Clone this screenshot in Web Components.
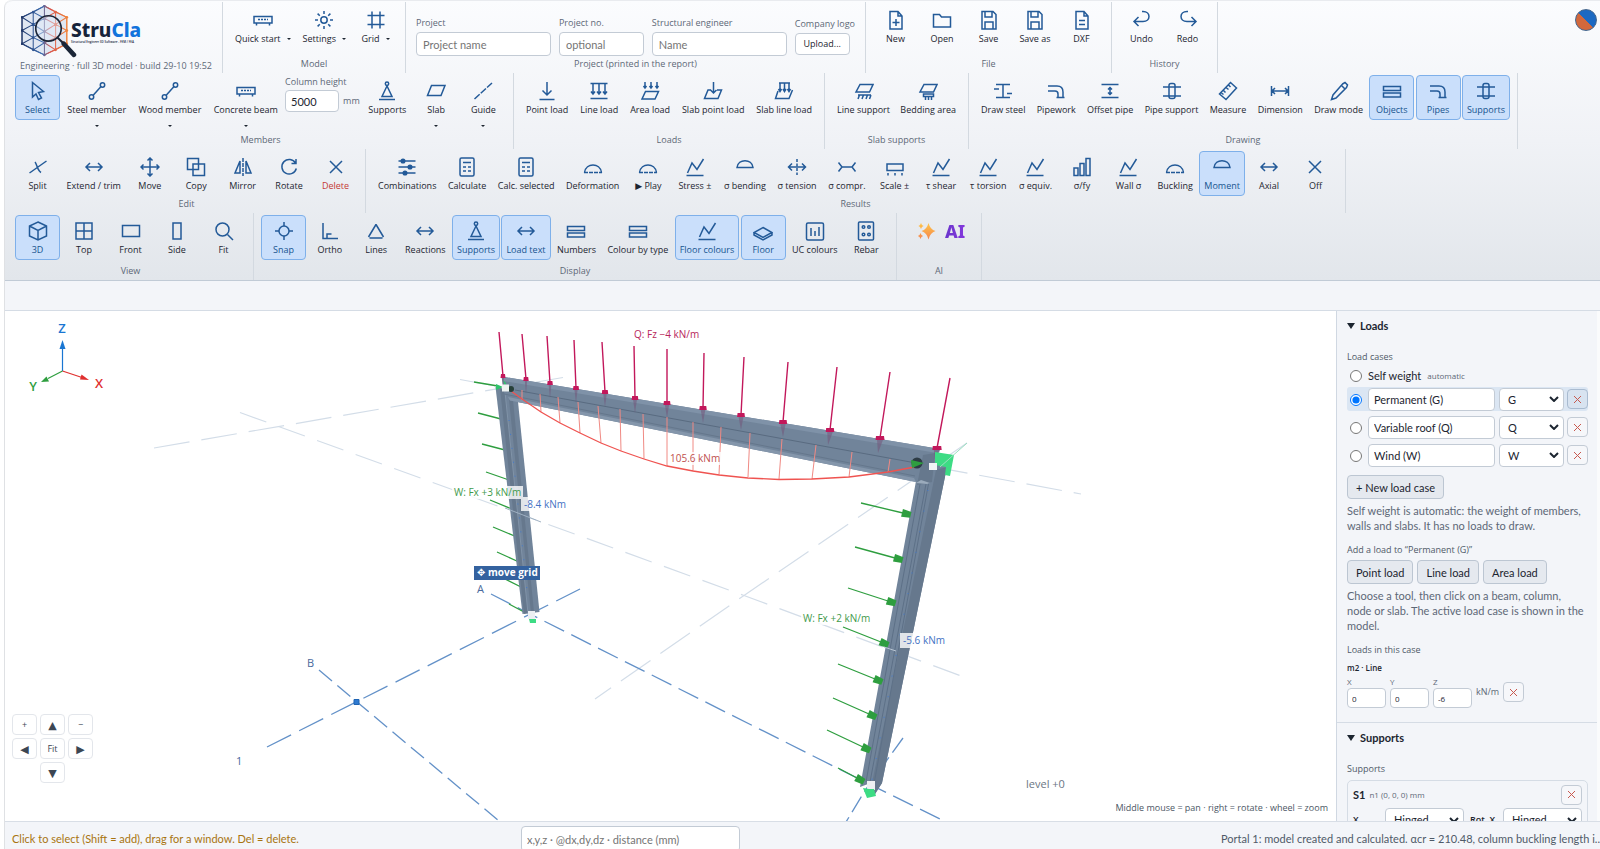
<!DOCTYPE html>
<html lang="en">
<head>
<meta charset="utf-8">
<title>StruCla – Engineering</title>
<style>
  html, body { margin: 0; height: 100%; background: #fff; overflow: hidden; }
  body { font: 11px/15px Lato, "Open Sans", sans-serif; color: #1c2530; }
</style>
</head>
<body>
<strucla-app></strucla-app>

<script>
const SMALL = '9px/14px "Open Sans", "DejaVu Sans", sans-serif';

/* Base class: clones the static markup of each element into an open root. */
class Base extends HTMLElement {
  constructor() {
    super();
    this.attachShadow({ mode: 'open' });
  }
  connectedCallback() {
    if (this.ready) return;
    this.ready = true;
    const t = document.createElement('template');
    t.innerHTML = `<style>*{box-sizing:border-box}</style>` + this.render();
    this.shadowRoot.append(t.content.cloneNode(true));
  }
}

/* Icons on a 20 × 20 grid. */
const slabLow = '<path d="M5.500 10.500h13L15 18H2z"/>';
const slabTop = '<path d="M6 3.500h13L15.500 11H2z"/>';
const calc = '<rect x="3" y="1" width="14" height="18" rx="1.500"/><path d="M6 5.500h8M6 10h3m2 0h3M6 14h3m2 0h3"/>';
const zig = '<path d="M2.500 16L7 6l5 6.500L18.500 2M1.500 18.500h17"/>';
const arch = '<path d="M1.500 15.500C3 5.500 17 5.500 18.500 15.500"/><path d="M1 15.500h18" stroke-dasharray="4 1"/>';
const dome = '<path d="M2 10.500h16C17 1.500 3 1.500 2 10.500z"/>';
const file = '<path d="M4 1.500h8l4 4.500v13H4zM12 1.500V6h4"/>';
const floppy = '<path d="M3 1.500h11l3 3v14.500H3zM6 1.500V7h7V1.500M6 19v-7h8v7"/>';
const both = '<path d="M2 10h16M6 6l-4 4 4 4M14 6l4 4-4 4"/>';
const bars2 = '<path d="M1.500 5.500h17v4h-17zM1.500 12h17v4h-17z"/>';
const pipe = '<path d="M2 5h9c4 0 6 2 6 6v5.500M2 10h7c2 0 3 1 3 3v3.500M10.500 16.500h8"/>';
const clamp = '<rect x="7" y="2.500" width="6" height="15" rx="2"/><path d="M1 6h18M1 15h18"/>';
const beam = '<path d="M1 6.500h18v6.500H1zM3.500 13v2.500M16.500 13v2.500"/><path d="M5 9.500h10" stroke-dasharray="2 1"/>';
const member = '<circle cx="4.500" cy="16" r="2.200"/><circle cx="15.500" cy="4" r="2.200"/><path d="M6 14.500L14 5.500"/>';
const support = '<circle cx="10" cy="2.800" r="1.700"/><path d="M10 5L5 15.500h10zM2 18.500h16"/>';
const cross = '<path d="M4 4l12 12M16 4L4 16"/>';
const ICONS = {
  beam, member, support, calc, zig, arch, dome, both, bars2, pipe, clamp, cross,
  sun: '<circle cx="10" cy="10" r="3.200"/><path d="M10 1v3M10 16v3M1 10h3M16 10h3M3.600 3.600l2.200 2.200M14.200 14.200l2.200 2.200M16.400 3.600l-2.200 2.200M5.800 14.200l-2.200 2.200"/>',
  grid: '<path d="M6 1.500v17M14 1.500v17M1.500 5.500h17M1.500 14.500h17"/>',
  new: file + '<path d="M10 9v7M6.500 12.500h7"/>',
  open: '<path d="M1.500 4.500h6l2 2.500h9v10h-17z"/>',
  save: floppy,
  dxf: file + '<path d="M7 10.500h6M7 14.500h6"/>',
  undo: '<path d="M2 11.500h9c8 0 8-10 0-10h-1M6.500 7l-4.500 4.500L6.500 16"/>',
  redo: '<path d="M18 11.500H9c-8 0-8-10 0-10h1M13.500 7l4.500 4.500-4.500 4.500"/>',
  cursor: '<path d="M4.500 1.500l11 9-5 1 3 5.500-3 1.500-2.500-5.500-3.500 3z"/>',
  slab: '<path d="M5.500 4.500h13.500L15 14.500H1.500z"/>',
  guide: '<path d="M1.500 18L19 2" stroke-dasharray="7 1.500"/>',
  pload: '<path d="M10 1v13M5.500 9.500L10 14l4.500-4.500M2.500 18.500h15"/>',
  lload: '<path d="M1.500 2.500h17M4 2.500v10M10 2.500v10M16 2.500v10M2 10.500l2 2.500 2-2.500M8 10.500l2 2.500 2-2.500M14 10.500l2 2.500 2-2.500M1.500 17.500h17"/>',
  aload: '<path d="M5 1v6M11 1v6M17 1v6M3.500 5L5 7l1.500-2M9.500 5L11 7l1.500-2M15.500 5L17 7l1.500-2"/>' + slabLow,
  spload: '<path d="M10.500 1v11M7.500 9l3 3 3-3M8 9H5L1.500 17.500H15L18.500 9H14"/>',
  slload: '<path d="M5 2h11M6 2v8M10.500 2v8M15 2v8M4.500 8L6 10.500 7.500 8M9 8l1.500 2.500L12 8M13.500 8l1.500 2.500L16.500 8M4 10L1.500 17.500H15L18.500 9"/>',
  lsupp: slabTop + '<path d="M4 14h13M5.500 14l-1.500 4M9.500 14L8 18M13.500 14L12 18M17 14l-1.500 4"/>',
  bed: slabTop + '<path d="M5.500 13h10v2.500h-10zM7.500 15.500V19M10.500 15.500V19M13.500 15.500V19"/>',
  steel: '<path d="M3 3.500h14M3 16.500h14M10 3.500v13M1 8h5M14 12.500h5"/>',
  offset: '<path d="M1.500 3.500h17M1.500 16.500h17M10 7v6M8 8.500L10 6.500l2 2M8 11.500l2 2 2-2"/>',
  ruler: '<path d="M12.500 1.500l6 5.500L8 18.500 1.500 13zM10.500 4l2 2M8 6.500l2.500 2M5.500 9.500l2 2M3.500 12l2 1.500"/>',
  dim: '<path d="M1.500 5v10M18.500 5v10M1.500 10h17M5 7l-3 3 3 3M15 7l3 3-3 3"/>',
  pencil: '<path d="M13.500 3L16 1.500 18.500 4 17.500 6.500 7 17l-4.500 1.500L4 14zM12.500 4.500L16 8"/>',
  split: '<path d="M1.500 16L18.500 4M7 5c2 2 2 8 6 10.500"/>',
  move: '<path d="M10 1v18M1 10h18M7.500 3.500L10 1l2.500 2.500M7.500 16.500L10 19l2.500-2.500M3.500 7.500L1 10l2.500 2.500M16.500 7.500L19 10l-2.500 2.500"/>',
  copy: '<path d="M1.500 1.500h11v11h-11zM7 7h11.500v11.500H7z"/>',
  mirror: '<path d="M7 4v12H2zM13 4v12h5z"/><path d="M10 1v18" stroke-dasharray="4 1"/>',
  rotate: '<path d="M16.500 6A7.300 7.300 0 1 0 17.300 11.500M17 2v4.500h-4.500"/>',
  sliders: '<path d="M1.500 4h17M1.500 10h17M1.500 16h17"/><g fill="#235a98"><circle cx="6" cy="4" r="1.800"/><circle cx="13" cy="10" r="1.800"/><circle cx="8" cy="16" r="1.800"/></g>',
  tension: '<path d="M2 10h16M5 6.500L1.500 10 5 13.500M15 6.500l3.500 3.500-3.500 3.500"/><path d="M10 2v16" stroke-dasharray="3 1.500"/>',
  compr: '<path d="M1.500 5.500L5 10l-3.500 4.500M18.500 5.500L15 10l3.500 4.500M5 10h10"/>',
  scale: '<path d="M2 7h16v6.500H2zM3 16v2.500M10 16v2.500M17 16v2.500"/>',
  ratio: '<path d="M2 11h4v7.500H2zM8 6.500h4v12H8zM14 1.500h4v17h-4z"/>',
  cube: '<path d="M10 1l8.500 4v10L10 19l-8.500-4V5zM1.500 5L10 9.500 18.500 5M10 9.500V19"/>',
  quad: '<path d="M2 2h16v16H2zM10 2v16M2 10h16"/>',
  front: '<path d="M1.500 4.500h17v11h-17z"/>',
  side: '<path d="M6 2h8v16H6z"/>',
  fit: '<circle cx="8.500" cy="8.500" r="6.500"/><path d="M13.500 13.500l5.500 5.500"/>',
  snap: '<circle cx="10" cy="10" r="5"/><path d="M10 1v4M10 15v4M1 10h4M15 10h4"/>',
  ortho: '<path d="M3 2v15.500h15M7 17v-4h4.500"/>',
  lines: '<path d="M10 3.500L2.500 16M10 3.500L17.500 16M3.500 17h13"/>',
  floor: '<path d="M10 6.500l9 5-9 5-9-5zM1 11.500v2.500l9 5 9-5v-2.500"/>',
  uc: '<rect x="1.500" y="2" width="17" height="17" rx="1.500"/><path d="M6 7v8M10 10v5M14 6v9"/>',
  rebar: '<rect x="2.500" y="1" width="15" height="18" rx="1"/><circle cx="7.500" cy="6" r="1.300"/><circle cx="13" cy="6" r="1.300"/><circle cx="7.500" cy="13.500" r="1.300"/><circle cx="13" cy="13.500" r="1.300"/>'
};

customElements.define('ribbon-button', class extends Base {
  render() {
    const caret = this.getAttribute('caret');
    return `<style>
      :host { display: block; }
      button { display: flex; flex-direction: column; align-items: center; min-width: 45px; min-height: 45px;
        padding: 5px 4px 2px; border: 1px solid transparent; border-radius: 4px; background: none;
        font: ${SMALL}; color: #1c2530; white-space: nowrap; }
      :host([active]) button { background: #cadffb; border-color: #7eb0ea; color: #17548f; }
      :host([danger]) button { color: #c43a35; }
      svg { display: block; width: 20px; height: 20px; margin-bottom: 2px; fill: none; stroke: #235a98; stroke-width: 1.500; }
      span { display: flex; align-items: center; gap: 6px; }
      :host([caret="below"]) span { flex-direction: column; gap: 8px; }
      i { border: 2px solid transparent; border-top: 2px solid #1c2530; border-bottom: 0; }
    </style>
    <button type="button"><svg viewBox="0 0 20 20" aria-hidden="true">${ICONS[this.getAttribute('icon')]}</svg>
      <span><slot></slot>${caret ? '<i></i>' : ''}</span></button>`;
  }
});

customElements.define('ribbon-group', class extends Base {
  render() {
    return `<style>
      :host { display: flex; flex-direction: column; flex: none; width: var(--w); padding: 2px 7px 2px; border-right: 1px solid #d3d9e0; box-sizing: border-box; }
      .items { flex: 1; display: flex; justify-content: space-between; align-items: flex-start; }
      :host([fields]) .items { justify-content: flex-start; gap: 8px; padding: 12px 3px 0; }
      :host([center]) .items { justify-content: center; }
      .title { font: ${SMALL}; color: #5d6877; text-align: center; }
    </style><div class="items"><slot></slot></div><div class="title">${this.getAttribute('label')}</div>`;
  }
});

customElements.define('ribbon-field', class extends Base {
  render() {
    const unit = this.getAttribute('unit');
    return `<style>
      :host { display: block; width: var(--fw, 135px); }
      label { display: block; height: 16px; font: ${SMALL}; color: #5d6877; white-space: nowrap; }
      div { display: flex; align-items: center; gap: 4px; font: ${SMALL}; color: #5d6877; }
      input { width: 100%; height: 24px; padding: 0 6px; border: 1px solid #c3cbd5; border-radius: 4px; background: #fff;
        font: 11px Lato, "Open Sans", sans-serif; color: #1c2530; }
      :host([unit]) label { height: 15px; }
      :host([unit]) input { width: 54px; height: 22px; padding: 0 5px; }
      input::placeholder { color: #757575; opacity: 1; }
    </style><label for="f">${this.getAttribute('label')}</label>
    <div><input id="f" placeholder="${this.getAttribute('placeholder') || ''}" value="${this.getAttribute('value') || ''}">${unit ? `<span>${unit}</span>` : ''}</div>`;
  }
});

customElements.define('logo-upload', class extends Base {
  render() {
    return `<style>
      :host { display: block; font: ${SMALL}; color: #5d6877; white-space: nowrap; }
      div { height: 17px; padding-top: 1px; }
      button { width: 55px; height: 22px; padding: 0; border: 1px solid #c3cbd5; border-radius: 4px; background: #fff; font: inherit; color: #1c2530; }
    </style><div>Company logo</div><button type="button">Upload...</button>`;
  }
});

customElements.define('brand-mark', class extends Base {
  render() {
    const P = [[23,1],[12,7],[34,7],[1,12],[23,13],[45,12],[12,19],[34,19],[1,25],[23,26],[45,25],[12,32],[34,32],[1,38],[23,37],[45,38],[12,44],[34,44],[23,49]];
    let net = '';
    P.forEach((a, i) => P.forEach((b, j) => {
      if (j > i && Math.hypot(a[0] - b[0], a[1] - b[1]) < 14.5) net += `M${a[0]} ${a[1]}L${b[0]} ${b[1]}`;
    }));
    return `<style>
      :host { display: flex; flex-direction: column; flex: none; width: 215px; padding: 2px 0 0 12px; border-right: 1px solid #d3d9e0; box-sizing: border-box; }
      .top { display: flex; align-items: center; height: 57px; }
      svg { flex: none; width: 57px; height: 53px; margin-left: 1px; }
      .name { margin-left: -7px; font: 800 19px/20px "Noto Sans", sans-serif; color: #16233b; }
      .name b { font-weight: 800; color: #1273dc; }
      .name small { display: block; font: 600 3px/4px "Open Sans", sans-serif; color: #16233b; white-space: nowrap; }
      .line { font: ${SMALL}; color: #5d6877; white-space: nowrap; }
    </style>
    <div class="top"><svg viewBox="0 0 56 52" fill="none" aria-hidden="true">
      <defs><linearGradient id="g" gradientUnits="userSpaceOnUse" x1="0" y1="0" x2="46" y2="0"><stop offset="0" stop-color="#1f3566"/><stop offset=".45" stop-color="#3b6cb0"/><stop offset=".62" stop-color="#d9534a"/><stop offset="1" stop-color="#f0853c"/></linearGradient></defs>
      <path d="M23 1L45 12v26L23 49 1 38V12z" fill="#e0e7f2" stroke="url(#g)"/>
      <path d="${net}" stroke="url(#g)" stroke-width="1"/>
      <g fill="url(#g)">${P.map(p => `<circle cx="${p[0]}" cy="${p[1]}" r="1.300"/>`).join('')}</g>
      <circle cx="27" cy="23" r="12.500" fill="#dfeafa" fill-opacity=".45" stroke="#1a2537" stroke-width="1.600"/>
      <path d="M36 32l5 5" stroke="#1a2537" stroke-width="2"/><path d="M42 38l10 11" stroke="#1a2537" stroke-width="4.500" stroke-linecap="round"/>
    </svg>
    <div class="name">Stru<b>Cla</b><small>Structural Engineer 3D Software - FEM / FEA</small></div></div>
    <div class="line">Engineering · full 3D model · build 29-10 19:52</div>`;
  }
});

customElements.define('ai-button', class extends Base {
  render() {
    return `<style>
      :host { display: block; }
      button { display: flex; align-items: center; gap: 9px; padding: 7px 4px 7px 8px; border: 0; background: none; font: 800 18px/18px "Noto Sans", sans-serif; }
      span { background: linear-gradient(90deg, #6a35cc, #8438dc); -webkit-background-clip: text; background-clip: text; color: transparent; }
      svg { width: 19px; height: 18px; }
    </style><button type="button"><svg viewBox="0 0 19 18" aria-hidden="true"><defs><linearGradient id="s" x1="0" y1="0" x2="0" y2="1"><stop offset="0" stop-color="#ffc648"/><stop offset="1" stop-color="#f5854e"/></linearGradient></defs><g fill="url(#s)"><path d="M11.500 1q1.600 6.400 7 8-5.400 1.600-7 8.500-1.600-6.900-7-8.500 5.400-1.600 7-8z"/><path d="M4 1q.6 2.400 2.600 3Q4.600 4.600 4 7 3.400 4.600 1.400 4 3.400 3.400 4 1zM3.500 11q.6 2.400 2.600 3-2 .6-2.600 3-.6-2.400-2.600-3 2-.6 2.600-3z"/></g></svg><span>AI</span></button>`;
  }
});

customElements.define('ribbon-bar', class extends Base {
  render() {
    const row = items => items.map(([icon, text, extra = '']) => `<ribbon-button icon="${icon}" ${extra}>${text}</ribbon-button>`).join('');
    const group = (label, w, items, extra = '') => `<ribbon-group label="${label}" style="--w:${w}px" ${extra}>${items}</ribbon-group>`;
    return `<style>
      :host { display: block; position: relative; border-top: 1px solid #e9ebef; border-bottom: 1px solid #c1cbd6; border-radius: 8px 0 0 0; background: linear-gradient(#fbfcfe, #f0f2f6 50%, #e2e6eb); }
      .row { display: flex; padding-left: 3px; }
      .r1 { height: 72px; padding-top: 1px; } .r2 { height: 76px; } .r3 { height: 64px; } .r4 { height: 67px; }
      .user { position: absolute; right: 3px; top: 8px; width: 22px; height: 22px; padding: 0; border: 1px solid #43658d; border-radius: 50%; background: linear-gradient(45deg, #d2683c 50%, #1c69c2 50%); }
    </style>
    <div class="row r1"><brand-mark></brand-mark>
      ${group('Model', 183, row([['beam', 'Quick start', 'caret="inline"'], ['sun', 'Settings', 'caret="inline"'], ['grid', 'Grid', 'caret="inline"']]))}
      ${group('Project (printed in the report)', 460, `
        <ribbon-field label="Project" placeholder="Project name"></ribbon-field>
        <ribbon-field label="Project no." placeholder="optional" style="--fw:85px"></ribbon-field>
        <ribbon-field label="Structural engineer" placeholder="Name"></ribbon-field>
        <logo-upload></logo-upload>`, 'fields')}
      ${group('File', 246, row([['new', 'New'], ['open', 'Open'], ['save', 'Save'], ['save', 'Save as'], ['dxf', 'DXF']]))}
      ${group('History', 106, row([['undo', 'Undo'], ['redo', 'Redo']]))}
    </div>
    <div class="row r2">
      ${group('Members', 506, row([['cursor', 'Select', 'active'], ['member', 'Steel member', 'caret="below"'], ['member', 'Wood member', 'caret="below"'], ['beam', 'Concrete beam', 'caret="below"']])
        + `<ribbon-field label="Column height" value="5000" unit="mm" style="--fw:76px"></ribbon-field>`
        + row([['support', 'Supports'], ['slab', 'Slab', 'caret="below"'], ['guide', 'Guide', 'caret="below"']]))}
      ${group('Loads', 311, row([['pload', 'Point load'], ['lload', 'Line load'], ['aload', 'Area load'], ['spload', 'Slab point load'], ['slload', 'Slab line load']]))}
      ${group('Slab supports', 144, row([['lsupp', 'Line support'], ['bed', 'Bedding area']]))}
      ${group('Drawing', 549, row([['steel', 'Draw steel'], ['pipe', 'Pipework'], ['offset', 'Offset pipe'], ['clamp', 'Pipe support'], ['ruler', 'Measure'], ['dim', 'Dimension'], ['pencil', 'Draw mode'], ['bars2', 'Objects', 'active'], ['pipe', 'Pipes', 'active'], ['clamp', 'Supports', 'active']]))}
    </div>
    <div class="row r3">
      ${group('Edit', 358, row([['split', 'Split'], ['both', 'Extend / trim'], ['move', 'Move'], ['copy', 'Copy'], ['mirror', 'Mirror'], ['rotate', 'Rotate'], ['cross', 'Delete', 'danger']]))}
      ${group('Results', 980, row([['sliders', 'Combinations'], ['calc', 'Calculate'], ['calc', 'Calc. selected'], ['arch', 'Deformation'], ['arch', '▶ Play'], ['zig', 'Stress ±'], ['dome', 'σ bending'], ['tension', 'σ tension'], ['compr', 'σ compr.'], ['scale', 'Scale ±'], ['zig', 'τ shear'], ['zig', 'τ torsion'], ['zig', 'σ equiv.'], ['ratio', 'σ/fy'], ['zig', 'Wall σ'], ['arch', 'Buckling'], ['dome', 'Moment', 'active'], ['both', 'Axial'], ['cross', 'Off']]))}
    </div>
    <div class="row r4">
      ${group('View', 246, row([['cube', '3D', 'active'], ['quad', 'Top'], ['front', 'Front'], ['side', 'Side'], ['fit', 'Fit']]))}
      ${group('Display', 643, row([['snap', 'Snap', 'active'], ['ortho', 'Ortho'], ['lines', 'Lines'], ['both', 'Reactions'], ['support', 'Supports', 'active'], ['both', 'Load text', 'active'], ['bars2', 'Numbers'], ['bars2', 'Colour by type'], ['zig', 'Floor colours', 'active'], ['floor', 'Floor', 'active'], ['uc', 'UC colours'], ['rebar', 'Rebar']]))}
      ${group('AI', 85, '<ai-button></ai-button>', 'center')}
    </div>
    <button type="button" class="user" aria-label="Account"></button>`;
  }
});

customElements.define('nav-pad', class extends Base {
  render() {
    const b = (t, a, c = '') => `<button type="button" aria-label="${a}" class="${c}">${t}</button>`;
    return `<style>
      :host { display: grid; grid-template-columns: repeat(3, 25px); grid-auto-rows: 21px; gap: 3px; }
      button { padding: 0; border: 1px solid #e3e6eb; border-radius: 4px; background: #fff; font: 9px/18px "Open Sans", "DejaVu Sans", sans-serif; color: #3c4653; }
      .down { grid-column: 2; } .tri { font-size: 11px; }
    </style>${b('+', 'Zoom in')}${b('▲', 'Up', 'tri')}${b('−', 'Zoom out')}${b('◀', 'Left', 'tri')}${b('Fit', 'Fit')}${b('▶', 'Right', 'tri')}${b('▼', 'Down', 'tri down')}`;
  }
});

customElements.define('model-view', class extends Base {
  render() {
    const down = [[499,332,503,376],[522,334,526,379],[547,336,550,383],[574,340,576,388],[602,342,605,392],[634,346,635,398],[667,349,667,403],[704,353,703,408],[744,357,741,415],[788,362,783,422],[837,367,830,430],[890,372,880,438],[950,378,937,448]];
    const left = [[474,382,498,386],[478,413,501,419],[482,444,505,450],[486,472,509,480],[490,500,512,509],[493,527,517,537],[497,552,519,562],[503,578,523,588],[509,604,524,612]];
    const right = [[861,503,903,513],[855,547,895,558],[848,588,888,601],[843,627,881,642],[838,664,875,679],[833,698,869,714],[827,730,863,747],[838,768,857,778]];
    const ords = [[522,390,522,400],[540,394,541,412],[558,397,560,423],[578,402,580,433],[598,406,601,443],[620,409,621,451],[643,414,644,459],[667,417,667,466],[693,422,693,471],[721,427,719,475],[750,433,748,477],[782,439,779,479],[816,445,812,479],[852,452,849,477],[890,459,888,472]];
    const moment = 'M511 391L522 399 541 412 560 423 580 433 601 443 621 451 644 459 667 466 693 471 719 475 748 478 779 479.500 812 479 849 477 888 472 920 466';
    const seg = a => a.map(p => `M${p[0]} ${p[1]}L${p[2]} ${p[3]}`).join('');
    const heads = down.map(([, , x, y], i) => {
      const w = 2 + i * .18;
      return `<path d="M${x - w} ${y - 2}h${2 * w}l.5 4h${-2 * w - 1}z" fill="#c2185b"/><path d="M${x - w + 1} ${y + 2}h${2 * w - 2}L${x - (i > 9 ? 2 : 0)} ${y + 15}z" fill="#72557a" opacity=".55"/>`;
    }).join('');
    const cones = right.map(([x0, y0, x, y]) => {
      const a = Math.atan2(y - y0, x - x0) * 180 / Math.PI;
      return `<path transform="translate(${x} ${y}) rotate(${a.toFixed(1)})" d="M-1-4L8-3V3L-1 4z" fill="#2e9e3f"/>`;
    }).join('');
    return `<style>
      :host { display: block; position: relative; overflow: hidden; background: #fff; }
      svg { display: block; position: absolute; inset: 0; width: 100%; height: 100%; font: 10px "Open Sans", sans-serif; }
      nav-pad { position: absolute; left: 7px; bottom: 38px; }
      .hint { position: absolute; right: 8px; bottom: 6px; font: ${SMALL}; color: #4c5765; }
    </style>
    <svg viewBox="5 311 1331 510" fill="none" preserveAspectRatio="xMidYMid slice" role="img" aria-label="3D model of the portal frame">
      <g stroke="#d3dde8" stroke-width="1.200" stroke-dasharray="36 12">
        <path d="M154 448L563 377.500"/><path d="M460 379.500L1081 494"/><path d="M240 412.500L744 595.500 964 677" stroke-dasharray="28 13"/><path d="M967 443L744 595.500 595 699"/>
      </g>
      <g stroke="#6391c8" stroke-width="1.300">
        <path d="M267 747L356 702 580 589" stroke-dasharray="27 9"/><path d="M319 670L357 702 505 826" stroke-dasharray="17 7"/>
        <path d="M491 594L532 615 865 782 946 822" stroke-dasharray="22 8"/><path d="M903 738L866 789 846 822" stroke-dasharray="18 6"/>
      </g>
      <path d="M354 699.500h5v5h-5z" fill="#2f7ad0" stroke="#1e64b4"/>

      <path d="${seg(down)}" stroke="#c2185b" stroke-width="1.400"/>
      <path d="${seg(left)}${seg(right)}" stroke="#2e9e3f" stroke-width="1.300"/>

      <!-- left column -->
      <path d="M495.500 387L517 392 539.500 612 522.500 614z" fill="#71849a"/>
      <path d="M500 388L505 390 528 613 524 614z" fill="#66788d"/><path d="M508 390L512 390 534 612 531 613z" fill="#66788d"/>
      <path d="M505 392L528 613" stroke="#8093a8"/><path d="M509 420L527 590" stroke="#3f78cf" stroke-width="1" stroke-dasharray="1 13"/>
      <!-- right column -->
      <path d="M916 481L926 455 947 467 882 783 875 794 868 784 860 787z" fill="#71849a"/>
      <path d="M936 470L947 467 882 783 875 794 872 783z" fill="#66788d"/>
      <path d="M920 484L866 782M926 484L870 782M931 470L874 784" stroke="#5d7087"/>
      <path d="M928 490L872 780" stroke="#3f78cf" stroke-dasharray="1 20"/>
      <!-- beam -->
      <path d="M501.500 376.500L940 449 930 470 916 482 510 400.500 504 392z" fill="#71849a"/>
      <path d="M501.500 376.500L940 449 937 453 503 381z" fill="#7f92a8"/>
      <path d="M508 397L914 478 916 482 510 400.500z" fill="#8496ab"/>
      <path d="M504 394L915 476" stroke="#65778c"/><path d="M515 390L927 465" stroke="#596b80"/>
      <path d="M923 455L935 453 932 482 917 485z" fill="#66788d"/><path d="M916 483L921 480 930 483 927 484z" fill="#9babbc"/>
      ${heads}${cones}
      <path d="M505 508L541 522" stroke="#9fb0c2"/><path d="M884 647L896 651" stroke="#b8c5d3"/>

      <!-- bending moment diagram -->
      <path d="${seg(ords)}" stroke="#f08a84"/>
      <path d="${moment}" stroke="#ef5350" stroke-width="1.300"/>

      <!-- nodes -->
      <circle cx="511" cy="389" r="3" fill="#27403a"/><path d="M496 384l7 3-7 3zM503 380l3 3-1 3z" fill="#2fc46c"/><path d="M502 384.500h7v7h-7z" fill="#eef3f1"/>
      <circle cx="917" cy="463" r="5.500" fill="#2d3b45"/><path d="M911 460l13 3-12 5z" fill="#2e9e3f"/>
      <path d="M935 452L954 455 950 476 945 475 946 467 935 465z" fill="#3ddc84"/><path d="M940 467L967 443" stroke="#9adfc0"/><path d="M929 463h8v7h-8z" fill="#f1f4f6"/>
      <path d="M528 611h7v8h-7z" fill="#eceff2"/><path d="M529 619h7v4h-6z" fill="#3ddc84"/>
      <path d="M867 781h8v9h-8z" fill="#eef1f3"/><path d="M863 788l6 1 5 0 2 7-9 2z" fill="#3ddc84"/>

      <!-- captions -->
      <g fill="#fff" fill-opacity=".8"><path d="M452 486h71v13h-71zM521 497h49v14h-49zM668 452h53v13h-53zM801 612h70v13h-70zM900 633h51v15h-51z"/></g>
      <text x="634" y="338" fill="#b8265a">Q: Fz −4 kN/m</text>
      <text x="454" y="496" fill="#3f9a4b">W: Fx +3 kN/m</text><text x="803" y="622" fill="#3f9a4b">W: Fx +2 kN/m</text>
      <text x="524" y="508" fill="#4472c4">-8.4 kNm</text><text x="903" y="644" fill="#4472c4">-5.6 kNm</text>
      <text x="670" y="462" fill="#c0504d">105.6 kNm</text>
      <g fill="#4a6a9c" font-size="11"><text x="477" y="593">A</text><text x="307" y="667">B</text><text x="236" y="765">1</text></g>
      <text x="1026" y="788" font-size="11" fill="#6b7684">level +0</text>
      <path d="M474 566h66v14h-66z" fill="#34629f"/><text x="477" y="576" fill="#fff" font-weight="700" font-family="Open Sans, DejaVu Sans, sans-serif">✥ move grid</text>

      <!-- axes -->
      <g stroke-width="1.200"><path d="M62.500 371V348" stroke="#1976d2"/><path d="M62.500 371L82 377.500" stroke="#e0302f"/><path d="M62.500 371L48 378.500" stroke="#2e9e3f"/></g>
      <path d="M62.500 340l3 9h-6z" fill="#1976d2"/><path d="M89 380l-9-.5 1.500-5z" fill="#e0302f"/><path d="M41 382l5.500-5.500 2.500 5z" fill="#2e9e3f"/>
      <g font-size="13" font-weight="600" text-anchor="middle"><text x="62" y="333" fill="#1976d2">Z</text><text x="99" y="388" fill="#e0302f">X</text><text x="33" y="391" fill="#2e9e3f">Y</text></g>
    </svg>
    <nav-pad></nav-pad>
    <div class="hint">Middle mouse = pan · right = rotate · wheel = zoom</div>`;
  }
});

const CONTROLS = `
  input[type=text], select { min-width: 0; height: 23px; padding: 0 5px; border: 1px solid #c3cbd5; border-radius: 4px; background: #fff; font: 11px Lato, "Open Sans", sans-serif; color: #1c2530; }
  select { appearance: none; padding: 0 8px; background: #fff url('data:image/svg+xml,<svg xmlns="http://www.w3.org/2000/svg" width="10" height="6" fill="none" stroke="%231c2530" stroke-width="2"><path d="M1 1l4 4 4-4"/></svg>') no-repeat right 4px center; }
  .x { flex: none; display: grid; place-items: center; width: 21px; height: 20px; padding: 0; border: 1px solid #c3cbd5; border-radius: 4px; background: #f6f7fa; }
  .x svg { width: 9px; height: 9px; fill: none; stroke: #c8594f; stroke-width: 1; }`;
const xButton = name => `<button type="button" class="x" aria-label="Delete ${name}"><svg viewBox="0 0 9 9"><path d="M1 1l7 7M8 1L1 8"/></svg></button>`;

customElements.define('load-case', class extends Base {
  render() {
    const n = this.getAttribute('name'), k = this.getAttribute('kind');
    return `<style>${CONTROLS}
      :host { display: flex; align-items: center; gap: 4px; height: 24px; border-radius: 3px; }
      :host([checked]) { background: #dbe6f3; }
      :host([checked]) .x { background: #d8e3f0; border-color: #a9bbd0; }
      input[type=radio] { flex: none; width: 12px; height: 12px; margin: 1px 2px 0 3px; }
      input[type=text] { flex: 1; width: 0; } select { width: 65px; } .x { margin-left: -1px; }
    </style><input type="radio" aria-label="${n}" ${this.hasAttribute('checked') ? 'checked' : ''}><input type="text" aria-label="Load case name" value="${n}">
    <select aria-label="Type"><option>${k}</option></select>${xButton(n)}`;
  }
});

customElements.define('panel-section', class extends Base {
  render() {
    return `<style>
      :host { display: block; padding: 7px 9px 14px 10px; border-bottom: 1px solid #d5dce5; }
      summary { display: flex; align-items: center; gap: 5px; height: 15px; font-weight: 700; list-style: none; }
      summary::before { content: ""; border: 4px solid transparent; border-top: 6px solid #1c2530; border-bottom: 0; }
    </style><details open><summary>${this.getAttribute('label')}</summary><slot></slot></details>`;
  }
});

customElements.define('side-panel', class extends Base {
  render() {
    const comp = (l, v) => `<label>${l}<input type="text" value="${v}"></label>`;
    return `<style>${CONTROLS}
      :host { display: block; overflow: hidden; border-left: 1px solid #d0d8e2; border-right: 3px solid #fafbfc; background: #f3f5f9; box-sizing: border-box; }
      h4 { margin: 0; font: 400 9px/14px "Open Sans", sans-serif; color: #4f5a68; }
      .first { margin-top: 17px; }
      .auto { display: flex; align-items: center; height: 23px; gap: 5px; }
      .auto input { width: 12px; height: 12px; margin: 1px 1px 0 3px; }
      .auto small { font: 8px "Open Sans", sans-serif; color: #5d6877; margin-left: 1px; }
      .cases { display: grid; grid-template-columns: minmax(0, 1fr); gap: 4px; margin-bottom: 8px; }
      .btn { height: 24px; padding: 0 8px; border: 1px solid #bcc6d2; border-radius: 4px; background: #e5e9ef; font: inherit; color: #1c2530; }
      p { margin: 4px 0 10px; line-height: 15px; color: #5d6877; }
      .tools { display: flex; gap: 4px; margin-top: 3px; }
      .who { font: 600 8px/14px "Open Sans", sans-serif; margin-top: 4px; }
      .vec { display: flex; align-items: flex-start; gap: 4px; font: 8px/13px "Open Sans", sans-serif; color: #5d6877; }
      .vec label { width: 39px; } .vec label input { display: block; width: 100%; height: 20px; padding: 0 4px; font: 8px "Open Sans", sans-serif; }
      .vec span { font-size: 9px; margin-top: 10px; } .vec .x { margin: 7px 0 0; }
      .card { border: 1px solid #d5dce5; border-radius: 5px; margin-top: 4px; padding: 3px 5px; }
      .head { display: flex; align-items: center; gap: 4px; height: 21px; font-weight: 700; } .head small { flex: 1; font: 8px "Open Sans", sans-serif; color: #5d6877; }
      .dof { display: grid; grid-template-columns: 29px 1fr 33px 1fr; column-gap: 3px; align-items: center; margin-top: 3px; font: 600 9px "Open Sans", sans-serif; }
      .dof label + select + label { padding-left: 3px; }
    </style>
    <panel-section label="Loads">
      <h4 class="first">Load cases</h4>
      <label class="auto"><input type="radio" name="c">Self weight <small>automatic</small></label>
      <div class="cases">
        <load-case name="Permanent (G)" kind="G" checked></load-case>
        <load-case name="Variable roof (Q)" kind="Q"></load-case>
        <load-case name="Wind (W)" kind="W"></load-case>
      </div>
      <button type="button" class="btn">+ New load case</button>
      <p>Self weight is automatic: the weight of members, walls and slabs. It has no loads to draw.</p>
      <h4>Add a load to “Permanent (G)”</h4>
      <div class="tools"><button type="button" class="btn">Point load</button><button type="button" class="btn">Line load</button><button type="button" class="btn">Area load</button></div>
      <p>Choose a tool, then click on a beam, column, node or slab. The active load case is shown in the model.</p>
      <h4>Loads in this case</h4>
      <div class="who">m2 · Line</div>
      <div class="vec">${comp('X', '0')}${comp('Y', '0')}${comp('Z', '-6')}<span>kN/m</span>${xButton('load')}</div>
    </panel-section>
    <panel-section label="Supports">
      <h4 class="first">Supports</h4>
      <div class="card">
        <div class="head">S1 <small>n1 (0, 0, 0) mm</small>${xButton('S1')}</div>
        <div class="dof"><label for="dx">X</label><select id="dx"><option>Hinged</option></select><label for="rx">Rot. X</label><select id="rx"><option>Hinged</option></select></div>
      </div>
    </panel-section>`;
  }
});

customElements.define('status-bar', class extends Base {
  render() {
    return `<style>
      :host { display: grid; grid-template-columns: 516px 219px minmax(0, 1fr); height: 28px; overflow: hidden; border-top: 1px solid #d8dee6; background: #f3f5f9; line-height: 34px; white-space: nowrap; box-sizing: border-box; }
      .tip { padding-left: 7px; color: #a8740f; }
      input { height: 26px; margin-top: 4px; padding: 0 5px; border: 1px solid #c3cbd5; border-radius: 4px; font: inherit; line-height: 20px; background: #fff; }
      input::placeholder { color: #757575; }
      .msg { overflow: hidden; text-overflow: ellipsis; text-align: right; color: #4f5a68; }
    </style><div class="tip">Click to select (Shift = add), drag for a window. Del = delete.</div>
    <input aria-label="Coordinates" placeholder="x,y,z · @dx,dy,dz · distance (mm)">
    <div class="msg">Portal 1: model created and calculated. αcr = 210.48, column buckling length i..</div>`;
  }
});

customElements.define('strucla-app', class extends Base {
  render() {
    return `<style>
      :host { display: grid; grid-template-rows: auto 30px minmax(0, 1fr) auto; height: 100vh; margin-left: 4px; border-left: 1px solid #dfe1e4; border-radius: 8px 0 0 0; box-sizing: border-box; }
      .strip { background: #f3f5f9; border-bottom: 1px solid #d5dce5; }
      main { display: grid; grid-template-columns: minmax(0, 1fr) 264px; min-height: 0; }
    </style><ribbon-bar></ribbon-bar><div class="strip"></div><main><model-view></model-view><side-panel></side-panel></main><status-bar></status-bar>`;
  }
});
</script>
</body>
</html>
